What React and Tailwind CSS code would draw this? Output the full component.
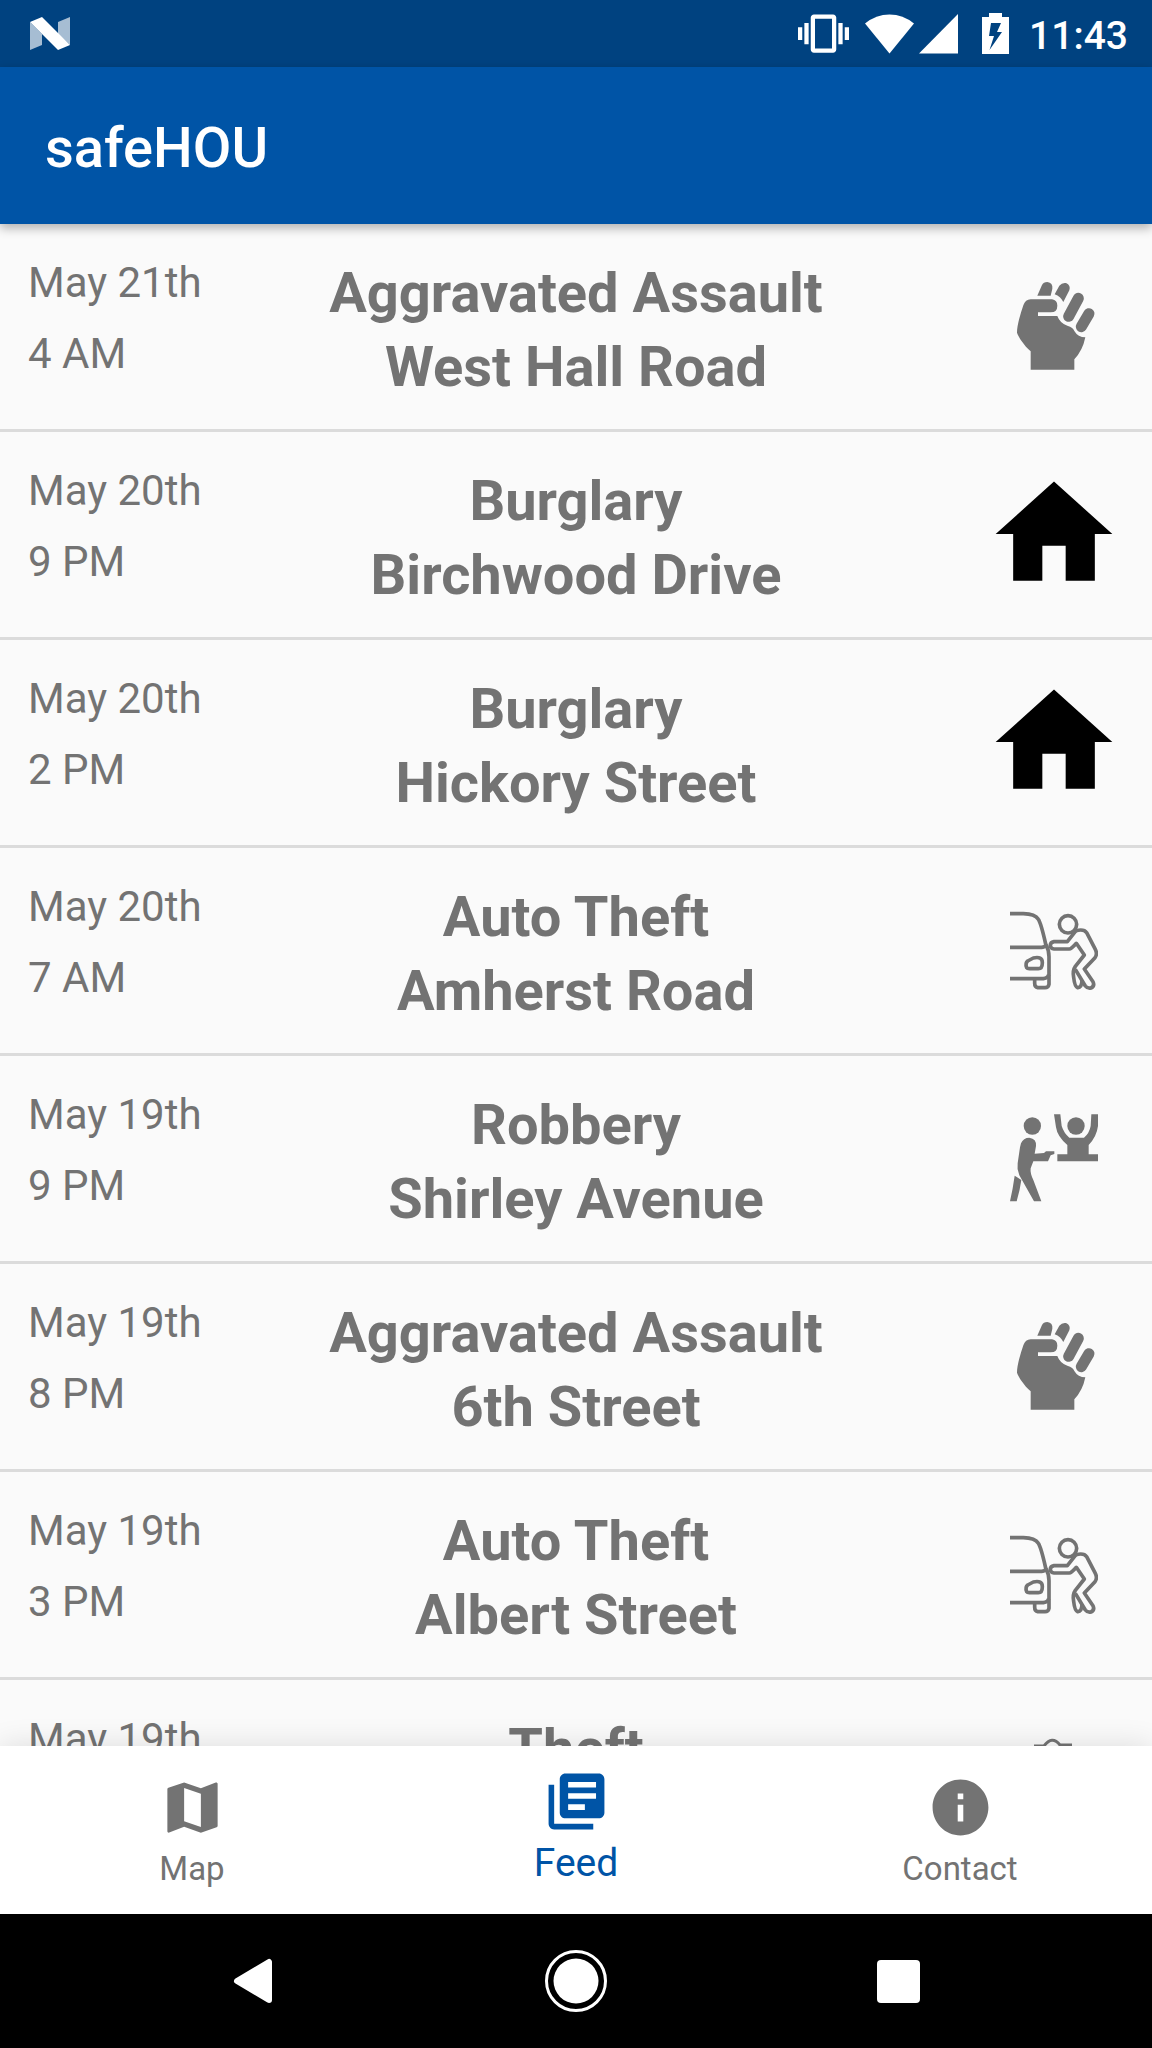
import React from 'react';
import { MdHome, MdInfo, MdLibraryBooks, MdMap, MdVibration } from 'react-icons/md';

const FistIcon = () => (
    <svg viewBox="150 96 264 264" className="w-[88px] h-[88px]" fill="currentColor" aria-hidden="true">
        <path d="M212 359V304C192 286 176 262 171 248C171 225 182 190 190 166Q196 148 212 148H276Q292 150 292 167Q292 187 272 187H234V198H292Q300 220 322 227Q340 232 343 243Q354 262 376 262Q368 302 343 328V359Z" />
        <path d="M232 137L246 105Q250 96 262 96Q279 98 277 116L272 137Z" />
        <path d="M284 133L298 107Q306 97 318 99Q333 106 328 121L310 156Q302 140 284 133Z" />
        <path d="M355 145L326 199M387 191L364 230" fill="none" stroke="currentColor" strokeWidth="33" strokeLinecap="round" />
    </svg>
);

const CarTheftIcon = () => (
    <svg viewBox="90 48 264 264" className="w-[88px] h-[88px]" fill="none" stroke="currentColor" strokeWidth="11" strokeLinejoin="round" aria-hidden="true">
        <path d="M90 71H130Q165 72 175 88Q183 100 197 162Q207 180 207 200V283Q205 293 195 293H173Q164 292 164 280V267" />
        <path d="M90 172H185Q197 171 199 163M90 266H190Q204 264 206 254" />
        <path d="M140 233Q135 220 143 213L160 204Q187 198 187 218Q187 236 175 236H148Q142 236 140 233Z" />
        <circle cx="264" cy="103" r="26" />
        <path d="M288 122Q312 116 320 128L346 178Q353 192 345 203L313 237L339 275Q345 288 333 294Q322 296 316 288L286 238" />
        <path d="M288 122L262 155H222Q211 157 211 166Q212 176 222 177H268Q274 177 289 160L313 195L286 229Q277 242 281 262Q284 290 293 293Q305 294 306 272" />
    </svg>
);

const RobberyIcon = () => (
    <svg viewBox="90 72 264 264" className="w-[88px] h-[88px]" fill="currentColor" aria-hidden="true">
        <circle cx="157" cy="108" r="26" />
        <path d="M123 160Q130 143 148 143Q170 146 168 168L164 191L192 189L198 184H223V192L212 196L204 214H160L152 235Q150 250 160 270L184 334H162L118 256Q110 238 113 220L120 172Z" />
        <path d="M104 257L124 270Q120 300 110 334H90Q98 300 104 257Z" />
        <circle cx="288" cy="108" r="26" />
        <path d="M222 73H241L245 108Q252 130 268 143H312Q328 130 332 108L334 73H354V108Q350 140 326 165V193H354V214H232V193H262V165Q232 140 228 112Z" />
    </svg>
);

const TheftIcon = () => (
    <svg viewBox="0 0 88 88" className="w-[88px] h-[88px]" fill="none" stroke="currentColor" strokeWidth="3" aria-hidden="true">
        <path d="M24 8H34Q42 -3 50 7H62M30 12V34M56 12V34M16 34H72" />
        <circle cx="43" cy="52" r="18" />
    </svg>
);

const HouseIcon = () => <MdHome className="w-[140px] h-[140px] text-black" aria-hidden="true" />;

const incidents = [
    { date: 'May 21th', time: '4 AM', type: 'Aggravated Assault', street: 'West Hall Road', icon: FistIcon },
    { date: 'May 20th', time: '9 PM', type: 'Burglary', street: 'Birchwood Drive', icon: HouseIcon },
    { date: 'May 20th', time: '2 PM', type: 'Burglary', street: 'Hickory Street', icon: HouseIcon },
    { date: 'May 20th', time: '7 AM', type: 'Auto Theft', street: 'Amherst Road', icon: CarTheftIcon },
    { date: 'May 19th', time: '9 PM', type: 'Robbery', street: 'Shirley Avenue', icon: RobberyIcon },
    { date: 'May 19th', time: '8 PM', type: 'Aggravated Assault', street: '6th Street', icon: FistIcon },
    { date: 'May 19th', time: '3 PM', type: 'Auto Theft', street: 'Albert Street', icon: CarTheftIcon },
    { date: 'May 19th', type: 'Theft', icon: TheftIcon },
];

const StatusBar = () => (
    <div className="flex h-[67px] shrink-0 items-center justify-between bg-[#004280] pl-[30px] pr-6 text-white">
        <svg viewBox="0 0 40 33" className="w-10 h-[33px]" fill="currentColor" aria-hidden="true">
            <path d="M0 5L12 17V28L0 33ZM28 5L40 0V28L28 17Z" opacity="0.65" />
            <path d="M0 5L12 0L40 28L28 33Z" />
        </svg>
        <div className="flex items-center">
            <MdVibration className="mr-4 w-[51px] h-[51px]" aria-hidden="true" />
            <svg viewBox="0 0 49 40" className="mr-[5px] w-[49px] h-10" fill="currentColor" aria-hidden="true">
                <path d="M24.5 39.5L0 9.5Q11 0.5 24.5 0.5T49 9.5Z" />
            </svg>
            <svg viewBox="0 0 39 40" className="mr-6 w-[39px] h-10" fill="currentColor" aria-hidden="true">
                <path d="M0 39.5L39 0V39.5Z" />
            </svg>
            <svg viewBox="0 0 27 41" className="mr-5 w-[27px] h-[41px]" fill="currentColor" aria-hidden="true">
                <path fillRule="evenodd" d="M7 0H20V4H27V41H0V4H7ZM9 10L7 23H12L7.500 37L20 19H15L19 10Z" />
            </svg>
            <span className="pt-1 text-[39px] leading-[48px] font-medium">11:43</span>
        </div>
    </div>
);

const IncidentRow = ({ date, time, type, street, icon: Icon }) => (
    <li className="grid h-[208px] grid-cols-[1fr_auto_1fr] border-b-[3px] border-[#dbdbdb] px-7">
        <div className="pt-[23px] text-[42px] leading-[71px]">
            <p>{date}</p>
            <p>{time}</p>
        </div>
        <div className="pt-8 text-center text-[56px] leading-[74px] font-bold">
            <h2>{type}</h2>
            <p>{street}</p>
        </div>
        <div className="flex w-[140px] items-center justify-center self-center justify-self-end pb-0.5">
            <Icon />
        </div>
    </li>
);

const BottomNav = () => (
    <nav className="relative z-10 grid h-[168px] shrink-0 grid-cols-3 bg-white text-[#737373] shadow-[0_0_28px_rgba(0,0,0,0.12)]">
        <a href="#map" className="flex flex-col items-center pt-7 text-[33px] leading-[56px]">
            <MdMap className="w-[67px] h-[67px]" aria-hidden="true" />
            Map
        </a>
        <a href="#feed" aria-current="page" className="flex flex-col items-center pt-[22px] text-[39px] leading-[56px] text-[#0054a6]">
            <MdLibraryBooks className="w-[67px] h-[67px]" aria-hidden="true" />
            Feed
        </a>
        <a href="#contact" className="flex flex-col items-center pt-7 text-[33px] leading-[56px]">
            <MdInfo className="w-[67px] h-[67px]" aria-hidden="true" />
            Contact
        </a>
    </nav>
);

const SystemBar = () => (
    <div className="relative z-10 flex h-[134px] shrink-0 justify-center bg-black text-white">
        <button aria-label="Back" className="flex w-[28%] items-center justify-center">
            <svg viewBox="0 0 40 46" className="w-10 h-[46px]" fill="currentColor" stroke="currentColor" strokeWidth="6" strokeLinejoin="round">
                <path d="M4 23L36 4V42Z" />
            </svg>
        </button>
        <button aria-label="Home" className="flex w-[28%] items-center justify-center">
            <svg viewBox="0 0 64 64" className="w-16 h-16" fill="currentColor">
                <circle cx="32" cy="32" r="29.500" fill="none" stroke="currentColor" strokeWidth="3" />
                <circle cx="32" cy="32" r="22.500" />
            </svg>
        </button>
        <button aria-label="Recent apps" className="flex w-[28%] items-center justify-center">
            <span className="w-[43px] h-[43px] rounded bg-white" />
        </button>
    </div>
);

const App = () => {
    return (
        <div className="flex h-screen flex-col bg-[#fafafa] font-['Roboto',sans-serif] text-[#737373]">
            <StatusBar />
            <header className="relative z-10 flex h-[157px] shrink-0 items-center bg-[#0054a6] pl-[45px] pt-1 text-white shadow-[0_4px_10px_rgba(0,0,0,0.3)]">
                <h1 className="text-[56px] leading-[64px] font-medium">safeHOU</h1>
            </header>
            <main className="min-h-0 flex-1 overflow-y-auto [scrollbar-width:none]">
                <ul>
                    {incidents.map((incident, i) => (
                        <IncidentRow key={i} {...incident} />
                    ))}
                </ul>
            </main>
            <BottomNav />
            <SystemBar />
        </div>
    );
};

export default App;
